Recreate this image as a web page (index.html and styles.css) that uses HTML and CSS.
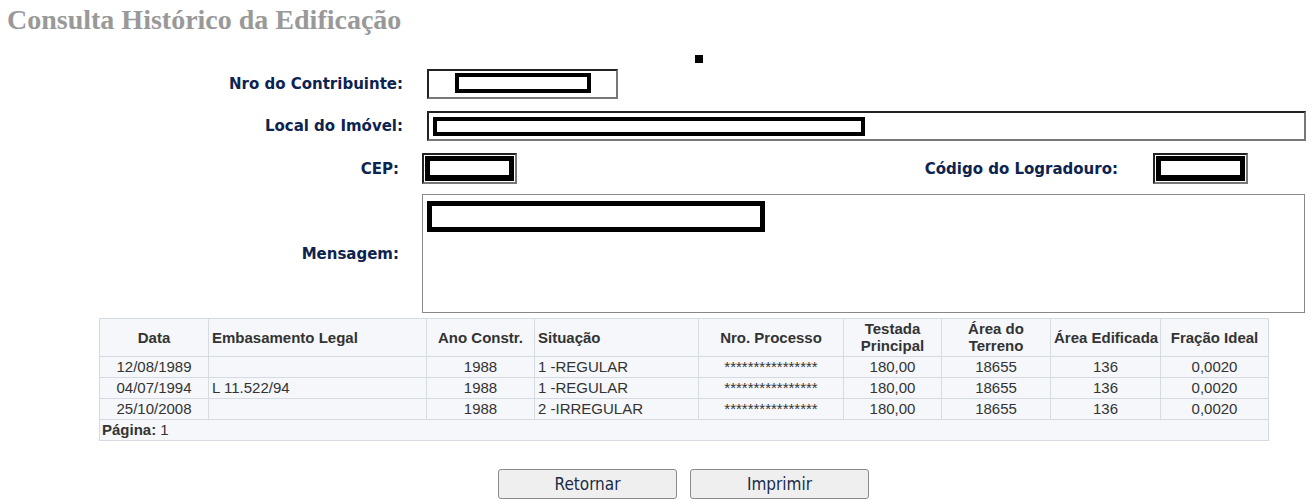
FILE: index.html
```html
<!doctype html>
<html lang="pt-BR">
<head>
<meta charset="utf-8">
<title>Consulta Histórico da Edificação</title>
<link rel="stylesheet" href="styles.css">
</head>
<body>

	<h1 class="title">Consulta Histórico da Edificação</h1>

	<div class="marker"></div>

	<div class="form">

		<div class="row row-nro">
			<label class="label">Nro do Contribuinte:</label>
			<div class="field field-nro"><span class="mask mask-nro"></span></div>
		</div>

		<div class="row row-local">
			<label class="label">Local do Imóvel:</label>
			<div class="field field-local"><span class="mask mask-local"></span></div>
		</div>

		<div class="row row-cep">
			<label class="label">CEP:</label>
			<div class="field field-small"><span class="mask mask-small"></span></div>
			<label class="label label-logr">Código do Logradouro:</label>
			<div class="field field-small field-logr"><span class="mask mask-small"></span></div>
		</div>

		<div class="row row-msg">
			<label class="label">Mensagem:</label>
			<div class="memo"><span class="mask mask-msg"></span></div>
		</div>

	</div>

	<table class="grid">
		<colgroup>
			<col style="width:109px">
			<col style="width:218px">
			<col style="width:108px">
			<col style="width:164px">
			<col style="width:145px">
			<col style="width:98px">
			<col style="width:109px">
			<col style="width:110px">
			<col style="width:108px">
		</colgroup>
		<thead>
			<tr>
				<th>Data</th>
				<th class="left">Embasamento Legal</th>
				<th>Ano Constr.</th>
				<th class="left">Situação</th>
				<th>Nro. Processo</th>
				<th>Testada<br>Principal</th>
				<th>Área do<br>Terreno</th>
				<th>Área Edificada</th>
				<th>Fração Ideal</th>
			</tr>
		</thead>
		<tbody>
			<tr>
				<td>12/08/1989</td>
				<td class="left"></td>
				<td>1988</td>
				<td class="left">1 -REGULAR</td>
				<td class="stars">****************</td>
				<td>180,00</td>
				<td>18655</td>
				<td>136</td>
				<td>0,0020</td>
			</tr>
			<tr>
				<td>04/07/1994</td>
				<td class="left">L 11.522/94</td>
				<td>1988</td>
				<td class="left">1 -REGULAR</td>
				<td class="stars">****************</td>
				<td>180,00</td>
				<td>18655</td>
				<td>136</td>
				<td>0,0020</td>
			</tr>
			<tr>
				<td>25/10/2008</td>
				<td class="left"></td>
				<td>1988</td>
				<td class="left">2 -IRREGULAR</td>
				<td class="stars">****************</td>
				<td>180,00</td>
				<td>18655</td>
				<td>136</td>
				<td>0,0020</td>
			</tr>
		</tbody>
		<tfoot>
			<tr>
				<td class="left pager" colspan="9"><b>Página:</b> 1</td>
			</tr>
		</tfoot>
	</table>

	<div class="actions">
		<button class="btn">Retornar</button>
		<button class="btn">Imprimir</button>
	</div>

</body>
</html>
```

FILE: styles.css
```css
body { font: 15px "Liberation Sans", Arial, sans-serif; margin: 0; color: #333; background: #fff; }

.title { font: bold 28px/32px "Liberation Serif", "Times New Roman", serif; color: #999; margin: 0; padding: 4px 7px 0; }

.marker { width: 8px; height: 8px; background: #000; margin: 19px 0 0 695px; }

/* form rows */
.form { margin-top: 6px; }
.row { display: flex; align-items: center; }
.row + .row { margin-top: 12px; }
.row-msg { margin-top: 10px !important; }

.label { font: bold 15px "DejaVu Sans", Verdana, sans-serif; color: #0d2350; text-align: right; box-sizing: border-box; }
.row-nro .label, .row-local .label { width: 403px; margin-right: 24px; }
.row-cep .label, .row-msg .label { width: 399px; margin-right: 23px; }
.row-cep .label-logr { width: 601px; margin-right: 35px; }

.field { box-sizing: border-box; height: 30px; background: #fff; border: 2px solid; border-color: #222 #777 #777 #222; display: flex; }
.field-nro { width: 191px; padding: 2px 0 0 26px; }
.field-local { width: 879px; padding: 4px 0 0 4px; }
.field-small { width: 95px; height: 31px; padding: 1px; }

.memo { box-sizing: border-box; width: 883px; height: 119px; border: 1px solid #888; padding: 6px 0 0 4px; background: #fff; }

/* redacted values */
.mask { display: block; box-sizing: border-box; border: 4px solid #000; background: #fff; }
.mask-nro { width: 136px; height: 20px; }
.mask-local { width: 432px; height: 19px; }
.mask-small { width: 89px; height: 25px; border-width: 5px 5px 6px; }
.mask-msg { width: 338px; height: 31px; border-width: 5px; }

/* history table */
.grid { margin: 5px 0 0 99px; width: 1169px; table-layout: fixed; border-collapse: collapse; background: #f5f7fa; color: #333; }
.grid th, .grid td { border: 1px solid #d5dbe2; text-align: center; overflow: hidden; white-space: nowrap; }
.grid th { font-weight: bold; line-height: 17px; padding: 1px 3px 2px; height: 34px; }
.grid td { line-height: 18px; padding: 1px 3px; height: 18px; }
.grid .left { text-align: left; }
.grid .stars { font-size: 15px; }
.grid .pager { padding-left: 2px; }

.actions { width: 1169px; margin: 28px 0 0 99px; display: flex; justify-content: center; gap: 13px; }
.btn { box-sizing: border-box; width: 179px; height: 30px; background: #efefef; border: 1px solid #8a8a8a; border-radius: 3px; font: 17px "DejaVu Sans Condensed", "DejaVu Sans", Tahoma, sans-serif; color: #1a2b48; padding: 0; }
```
